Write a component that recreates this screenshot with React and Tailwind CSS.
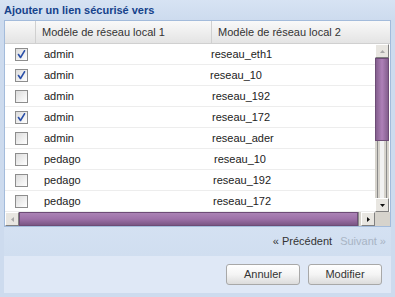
import React from "react";

const rows = [
  { c: true, a: "admin", b: "reseau_eth1", pb: "pl-[1px]" },
  { c: true, a: "admin", b: "reseau_10", pb: "pl-0" },
  { c: false, a: "admin", b: "reseau_192", pb: "pl-[2px]" },
  { c: true, a: "admin", b: "reseau_172", pb: "pl-[2px]" },
  { c: false, a: "admin", b: "reseau_ader", pb: "pl-[2px]" },
  { c: false, a: "pedago", b: "reseau_10", pb: "pl-[4px]" },
  { c: false, a: "pedago", b: "reseau_192", pb: "pl-[3px]" },
  { c: false, a: "pedago", b: "reseau_172", pb: "pl-[3px]" },
];

function Check({ checked }) {
  return (
    <div className="w-[13px] h-[13px] border border-[#8d8d8d] bg-gradient-to-br from-[#dcdcdc] to-[#ffffff] flex items-center justify-center">
      {checked && (
        <svg width="9" height="9" viewBox="0 0 9 9">
          <path d="M1.5 4.5 L3.5 7.5 L7.5 0.8" stroke="#2a4fa8" strokeWidth="1.6" fill="none" strokeLinecap="round" strokeLinejoin="round" />
        </svg>
      )}
    </div>
  );
}

function ArrowBtn({ dir, dim }) {
  const paths = {
    up: "M2 6 L4.5 3 L7 6 Z",
    down: "M2 3 L4.5 6 L7 3 Z",
    left: "M6 2 L3 4.5 L6 7 Z",
    right: "M3 2 L6 4.5 L3 7 Z",
  };
  return (
    <div className="w-[14px] h-[14px] bg-[#e8e6e1] border border-t-[#fff] border-l-[#fff] border-r-[#808080] border-b-[#808080] flex items-center justify-center shrink-0">
      <svg width="9" height="9" viewBox="0 0 9 9">
        <path d={paths[dir]} fill={dim ? "#a8a8a8" : "#111"} />
      </svg>
    </div>
  );
}

export default function App() {
  return (
    <div className="w-[395px] h-[297px] bg-[#cddbee] font-['Liberation_Sans',Arial,sans-serif] text-[11px] text-[#222] flex flex-col overflow-hidden">
      <div className="h-[20px] px-[4px] flex items-center font-bold text-[#15428b] bg-gradient-to-b from-[#d7e3f3] to-[#cddbee] shrink-0">
        Ajouter un lien sécurisé vers
      </div>
      <div className="mx-[4px] border border-[#a3bbdb] bg-white flex flex-col shrink-0">
        {/* header */}
        <div className="h-[23px] flex bg-gradient-to-b from-[#f9f9f9] to-[#e4e4e4] border-b border-[#d0d0d0]">
          <div className="w-[31px] border-r border-[#d0d0d0] shrink-0" />
          <div className="w-[176px] border-r border-[#d0d0d0] pl-[6px] flex items-center shrink-0 text-[#333]">
            Modèle de réseau local 1
          </div>
          <div className="flex-1 pl-[6px] flex items-center text-[#333]">Modèle de réseau local 2</div>
        </div>
        {/* body */}
        <div className="flex h-[168px]">
          <div className="flex-1 flex flex-col">
            {rows.map((r, i) => (
              <div key={i} className="h-[21px] flex items-center border-b border-[#ededed] shrink-0">
                <div className="w-[31px] pl-[10px] shrink-0">
                  <Check checked={r.c} />
                </div>
                <div className="w-[174px] pl-[8px] shrink-0 text-[#222]">{r.a}</div>
                <div className={`flex-1 ${r.pb} text-[#222]`}>{r.b}</div>
              </div>
            ))}
          </div>
          {/* vertical scrollbar */}
          <div className="w-[14px] flex flex-col mr-[1px]">
            <ArrowBtn dir="up" dim />
            <div className="h-[83px] bg-gradient-to-r from-[#845f8e] via-[#ae80b8] to-[#845f8e] border border-[#6d4c76] shrink-0" />
            <div className="flex-1 bg-[#d6d3cc] flex justify-center gap-[2px]">
              <div className="w-[1px] bg-[#8a8a8a]" />
              <div className="w-[4px] bg-[#f2f2f2]" />
              <div className="w-[1px] bg-[#8a8a8a]" />
            </div>
            <ArrowBtn dir="down" />
          </div>
        </div>
        {/* horizontal scrollbar */}
        <div className="flex h-[14px]">
          <ArrowBtn dir="left" dim />
          <div className="flex-1 bg-gradient-to-b from-[#ab83b5] via-[#9d71a8] to-[#7b5685] border border-[#6d4c76]" />
          <div className="w-[3px] bg-[#d6d3cc] flex gap-[1px]">
            <div className="w-[1px] bg-[#8a8a8a]" />
          </div>
          <ArrowBtn dir="right" />
          <div className="w-[15px] bg-[#d6d3cc]" />
        </div>
      </div>
      {/* pagination */}
      <div className="h-[29px] mx-[4px] flex items-center justify-end pr-[5px] gap-[8px] bg-gradient-to-b from-[#d4e1f2] to-[#d0def0] shrink-0">
        <span className="text-[#333]">« Précédent</span>
        <span className="text-[#a8b4c4]">Suivant »</span>
      </div>
      {/* bottom */}
      <div className="mx-[4px] h-[37px] bg-[#dfe8f6] flex items-center justify-end pr-[9px] gap-[8px] shrink-0">
        <button className="w-[74px] h-[21px] rounded-[3px] border border-[#a8a8a8] bg-gradient-to-b from-[#ffffff] via-[#f4f4f4] to-[#dcdcdc] text-[#333] text-[11px]">
          Annuler
        </button>
        <button className="w-[74px] h-[21px] rounded-[3px] border border-[#a8a8a8] bg-gradient-to-b from-[#ffffff] via-[#f4f4f4] to-[#dcdcdc] text-[#333] text-[11px]">
          Modifier
        </button>
      </div>
    </div>
  );
}
